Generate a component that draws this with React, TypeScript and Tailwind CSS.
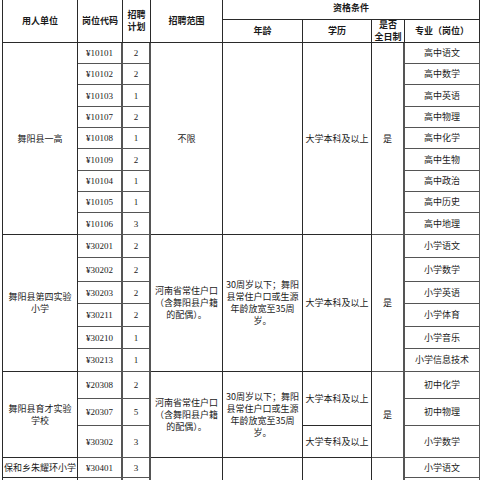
import React from "react";

const cell =
  "flex items-center justify-center text-center border-r border-b border-[#2a2a2a] leading-[12px]";
const inner =
  "flex items-center justify-center text-center border-r-2 border-b border-[#555] leading-[12px]";
const code = "font-['Liberation_Serif',serif] text-[9px]";

type Row = { c: string; n: string; m: string };

const g1: Row[] = [
  { c: "¥10101", n: "2", m: "高中语文" },
  { c: "¥10102", n: "2", m: "高中数学" },
  { c: "¥10103", n: "1", m: "高中英语" },
  { c: "¥10107", n: "2", m: "高中物理" },
  { c: "¥10108", n: "1", m: "高中化学" },
  { c: "¥10109", n: "2", m: "高中生物" },
  { c: "¥10104", n: "1", m: "高中政治" },
  { c: "¥10105", n: "1", m: "高中历史" },
  { c: "¥10106", n: "3", m: "高中地理" },
];
const g2: Row[] = [
  { c: "¥30201", n: "2", m: "小学语文" },
  { c: "¥30202", n: "2", m: "小学数学" },
  { c: "¥30203", n: "2", m: "小学英语" },
  { c: "¥30211", n: "2", m: "小学体育" },
  { c: "¥30210", n: "1", m: "小学音乐" },
  { c: "¥30213", n: "1", m: "小学信息技术" },
];

function Code({ v }: { v: string }) {
  return <div className={`${inner} ${code}`}>{v}</div>;
}
function Num({ v }: { v: string }) {
  return <div className={`${inner} ${code}`}>{v}</div>;
}
function Major({ v }: { v: string }) {
  return <div className={`${cell} border-[#555]`}>{v}</div>;
}

const age = (
  <>
    30周岁以下；舞阳
    <br />
    县常住户口或生源
    <br />
    年龄放宽至35周
    <br />
    岁。
  </>
);
const scope = (
  <>
    河南省常住户口
    <br />
    （含舞阳县户籍
    <br />
    的配偶）。
  </>
);

export default function App() {
  return (
    <div className="w-[480px] h-[480px] overflow-hidden bg-white text-[#1a1a1a] text-[9px] font-['Noto_Sans_CJK_SC','Noto_Sans',sans-serif]">
      <div className="ml-[2px] border-l border-[#2a2a2a] grid grid-cols-[75px_45px_28px_72px_80px_69px_33px_75px] grid-rows-[20px_23px_21px_21px_22px_21px_21px_22px_21px_21px_22px_23px_24px_22px_23px_22px_23px_27px_27px_32px_20px_22px]">
        {/* header */}
        <div className={`${cell} row-span-2 font-bold`}>用人单位</div>
        <div className={`${cell} row-span-2 font-bold`}>岗位代码</div>
        <div className={`${cell} row-span-2 font-bold leading-[11px]`}>
          招聘
          <br />
          计划
        </div>
        <div className={`${cell} row-span-2 font-bold`}>招聘范围</div>
        <div className={`${cell} col-span-4 font-bold pb-[4px]`}>资格条件</div>
        <div className={`${cell} font-bold`}>年龄</div>
        <div className={`${cell} font-bold`}>学历</div>
        <div className={`${cell} font-bold leading-[10px]`}>
          是否
          <br />
          全日制
        </div>
        <div className={`${cell} font-bold`}>专业（岗位）</div>

        {/* group 1 */}
        <div className={`${cell} row-span-9`}>舞阳县一高</div>
        <Code v={g1[0].c} />
        <Num v={g1[0].n} />
        <div className={`${cell} row-span-9`}>不限</div>
        <div className={`${cell} row-span-9`}></div>
        <div className={`${cell} row-span-9`}>大学本科及以上</div>
        <div className={`${inner} border-[#2a2a2a] row-span-9`}>是</div>
        <Major v={g1[0].m} />
        {g1.slice(1).map((r) => (
          <React.Fragment key={r.c}>
            <Code v={r.c} />
            <Num v={r.n} />
            <Major v={r.m} />
          </React.Fragment>
        ))}

        {/* group 2 */}
        <div className={`${cell} row-span-6`}>
          舞阳县第四实验
          <br />
          小学
        </div>
        <Code v={g2[0].c} />
        <Num v={g2[0].n} />
        <div className={`${cell} row-span-6`}>{scope}</div>
        <div className={`${cell} row-span-6`}>{age}</div>
        <div className={`${cell} row-span-6`}>大学本科及以上</div>
        <div className={`${inner} border-[#2a2a2a] row-span-6`}>是</div>
        <Major v={g2[0].m} />
        {g2.slice(1).map((r) => (
          <React.Fragment key={r.c}>
            <Code v={r.c} />
            <Num v={r.n} />
            <Major v={r.m} />
          </React.Fragment>
        ))}

        {/* group 3 */}
        <div className={`${cell} row-span-3`}>
          舞阳县育才实验
          <br />
          学校
        </div>
        <Code v="¥20308" />
        <Num v="2" />
        <div className={`${cell} row-span-3`}>{scope}</div>
        <div className={`${cell} row-span-3`}>{age}</div>
        <div className={`${cell} row-span-2`}>大学本科及以上</div>
        <div className={`${inner} border-[#2a2a2a] row-span-3`}>是</div>
        <Major v="初中化学" />
        <Code v="¥20307" />
        <Num v="5" />
        <Major v="初中物理" />
        <Code v="¥30302" />
        <Num v="3" />
        <div className={cell}>大学专科及以上</div>
        <Major v="小学数学" />

        {/* group 4 */}
        <div className={`${cell} whitespace-nowrap`}>保和乡朱耀环小学</div>
        <Code v="¥30401" />
        <Num v="3" />
        <div className={`${cell} row-span-2`}></div>
        <div className={`${cell} row-span-2`}></div>
        <div className={`${cell} row-span-2`}></div>
        <div className={`${inner} border-[#2a2a2a] row-span-2`}></div>
        <Major v="小学语文" />
        <div className={cell}></div>
        <Code v="" />
        <Num v="" />
        <Major v="" />
      </div>
    </div>
  );
}
